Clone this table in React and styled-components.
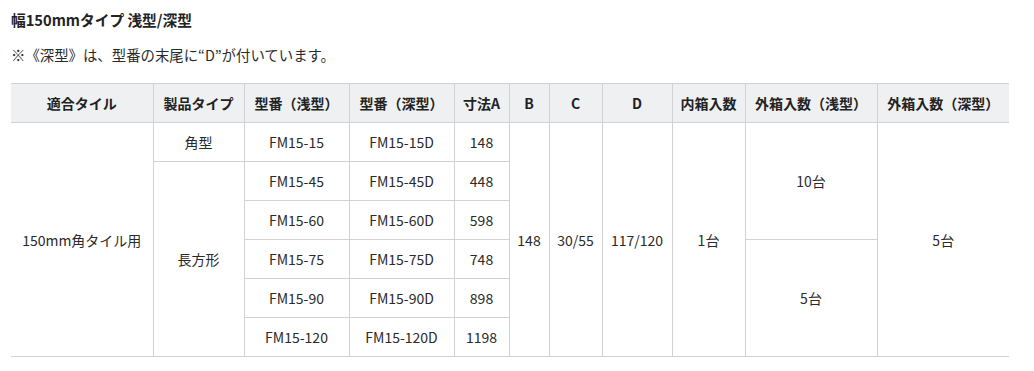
import React from 'react';
import styled, { createGlobalStyle } from 'styled-components';

const GlobalStyle = createGlobalStyle`
  html, body {
    margin: 0;
    padding: 0;
    background: #fff;
  }
  body {
    font-family: "Noto Sans CJK JP", "Noto Sans", sans-serif;
    color: #2a2a2a;
  }
`;

const Page = styled.div`
  padding: 8px 11px 0;
`;

const Title = styled.h3`
  margin: 0;
  font-size: 14.7px;
  line-height: 24px;
  font-weight: 700;
  color: #222;
`;

const Note = styled.p`
  margin: 11px 0 16px;
  font-size: 14.4px;
  line-height: 24px;
  color: #2a2a2a;
`;

const Table = styled.table`
  width: 998px;
  table-layout: fixed;
  border-collapse: collapse;
  font-size: 14px;
  line-height: 20px;
  text-align: center;
  border-top: 1px solid #d2d2d2;
  border-bottom: 1px solid #d2d2d2;
`;

const Th = styled.th`
  background: #eef0f1;
  font-weight: 700;
  color: #222;
  padding: 9px 0;
  white-space: nowrap;
  border-left: ${(p) => (p.$first ? 'none' : '1px solid #d2d2d2')};
`;

const Td = styled.td`
  padding: 9px 0;
  color: #2a2a2a;
  white-space: nowrap;
  vertical-align: middle;
  border: 1px solid #d2d2d2;
  border-left: ${(p) => (p.$first ? 'none' : '1px solid #d2d2d2')};
  border-right: ${(p) => (p.$last ? 'none' : '1px solid #d2d2d2')};
`;

const widths = [142, 91, 105, 105, 55, 40, 53, 70, 73, 132, 132];
const headers = [
  '適合タイル',
  '製品タイプ',
  '型番（浅型）',
  '型番（深型）',
  '寸法A',
  'B',
  'C',
  'D',
  '内箱入数',
  '外箱入数（浅型）',
  '外箱入数（深型）',
];

const models = [
  ['FM15-15', 'FM15-15D', '148'],
  ['FM15-45', 'FM15-45D', '448'],
  ['FM15-60', 'FM15-60D', '598'],
  ['FM15-75', 'FM15-75D', '748'],
  ['FM15-90', 'FM15-90D', '898'],
  ['FM15-120', 'FM15-120D', '1198'],
];

export default function App() {
  return (
    <Page>
      <GlobalStyle />
      <Title>幅150mmタイプ 浅型/深型</Title>
      <Note>※《深型》は、型番の末尾に“D”が付いています。</Note>
      <Table>
        <colgroup>
          {widths.map((w, i) => (
            <col key={i} style={{ width: w }} />
          ))}
        </colgroup>
        <thead>
          <tr>
            {headers.map((h, i) => (
              <Th key={h} $first={i === 0}>{h}</Th>
            ))}
          </tr>
        </thead>
        <tbody>
          {models.map(([shallow, deep, a], i) => (
            <tr key={shallow}>
              {i === 0 && <Td $first rowSpan={6}>150mm角タイル用</Td>}
              {i === 0 && <Td>角型</Td>}
              {i === 1 && <Td rowSpan={5}>長方形</Td>}
              <Td>{shallow}</Td>
              <Td>{deep}</Td>
              <Td>{a}</Td>
              {i === 0 && (
                <>
                  <Td rowSpan={6}>148</Td>
                  <Td rowSpan={6}>30/55</Td>
                  <Td rowSpan={6}>117/120</Td>
                  <Td rowSpan={6}>1台</Td>
                  <Td rowSpan={3}>10台</Td>
                  <Td $last rowSpan={6}>5台</Td>
                </>
              )}
              {i === 3 && <Td rowSpan={3}>5台</Td>}
            </tr>
          ))}
        </tbody>
      </Table>
    </Page>
  );
}
